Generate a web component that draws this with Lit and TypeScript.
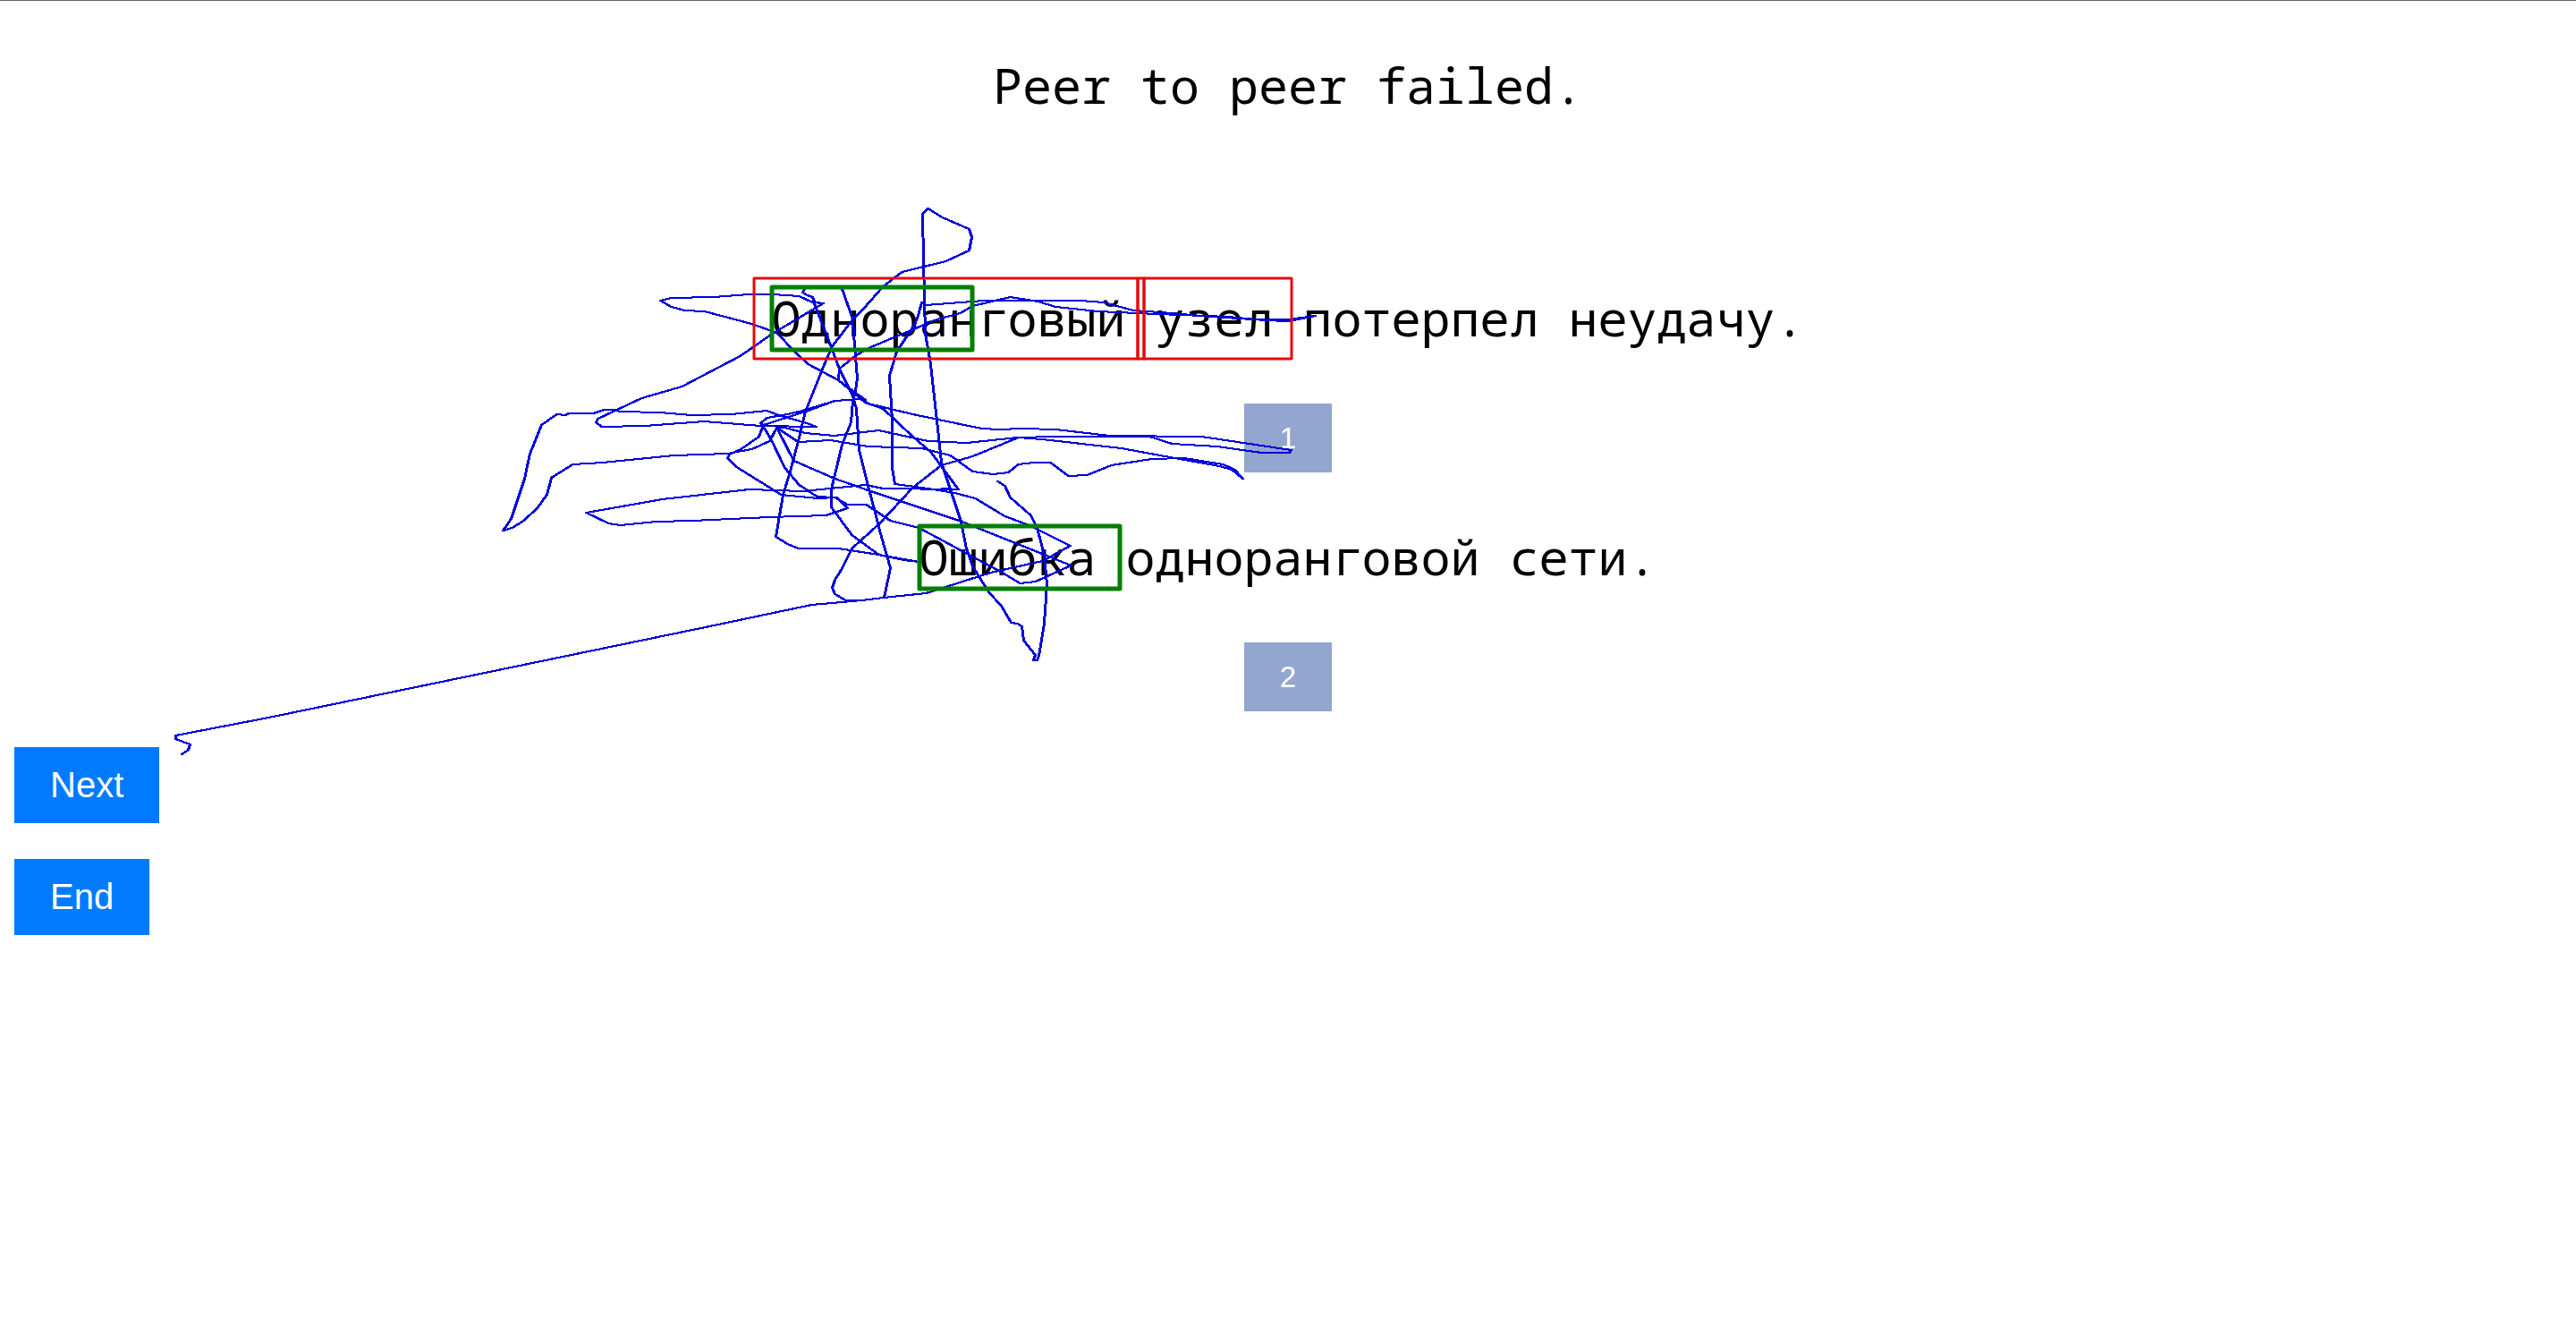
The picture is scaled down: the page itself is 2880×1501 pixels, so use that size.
import { LitElement, html, svg, css } from "lit";
import { customElement, property } from "lit/decorators.js";

/* Pointer trail, one entry per continuous stretch. */
const TRAILS: string[] = [
  "899,323 897,327 902,330 908,332 911,342 927,383 937,410 953,443 957,457 960,503 970,543 978,573 983,593 995,635 988,668",
  "941,323 953,357 955,387 958,423 956,437 953,448 951,472 941,497 933,530 929,547 929,567 952,598 982,620 1010,626 1027,628",
  "1027,628 982,620 937,613 892,613 880,608 867,600 875,553 883,527 892,493 900,460 920,410 930,387 953,357 965,345 987,320 1008,304 1057,292 1083,280 1086,265 1083,256 1053,243 1037,233 1031,239 1032,290 1033,333 1034,373 1040,407 1047,470 1052,517 1063,550 1074,583 1080,613 1087,633 1105,662 1119,677 1130,696 1137,697 1142,700 1144,716 1157,732 1155,738 1159,738 1161,733 1167,697 1170,653 1167,620 1159,590 1152,576 1129,556 1123,543 1115,538",
  "908,332 911,338 920,339 908,338 893,331 863,329 837,329 797,332 750,333 738,336 750,343 765,347 787,348 840,362 868,372 887,392 903,407 937,425 967,450 987,457 1020,488 1040,505 1057,528 1071,547 1053,546",
  "920,339 863,373 827,398 762,432 717,445 668,468 666,472 672,477 720,476 787,471 850,476 912,477 902,473 870,464 857,459 817,463 773,464 737,461 693,460 686,458 675,458 663,462 635,462 632,464 622,463 605,475 592,507 586,535 571,580 562,593 572,590 585,582 600,568 611,553 616,534 640,519 673,517 753,509 813,507 840,502 860,493 868,478 892,494 928,492 970,499 1030,501 1062,509 1087,527 1110,530 1127,528 1138,519 1155,517 1174,517 1194,532 1215,531 1242,520 1287,513 1323,512 1367,519 1380,525 1389,535 1377,525 1363,521 1313,512 1253,501 1200,495 1165,491 1138,489 1087,510 1052,520 1020,545 983,585 952,613 940,637 933,648 930,657 933,664 945,671 963,671",
  "963,671 987,668 1035,663 1060,655 1107,640 1165,627 1196,610 1150,587 1123,577 1090,557 1067,551 1037,546 1000,541 997,523 997,470 994,420 1002,393 1022,363 1026,353 1030,338 1035,341 1100,336 1207,336 1233,338 1267,347 1310,350 1353,354 1400,357 1440,357 1470,353 1440,359 1413,358 1373,354 1293,351 1227,348 1180,343 1160,337 1129,332 1087,342 1073,350 1047,357 973,388 957,397 938,412 937,425 967,447",
  "937,425 960,443 970,451 1020,463 1097,479 1117,480 1142,479 1180,480 1240,487 1343,488 1443,503 1441,506 1410,506 1360,499 1310,496 1285,488 1180,488 1137,489 1080,495 1037,493 982,481 932,487 900,484 877,478 868,478 887,515 933,535 970,548 1075,583 1197,632 1157,650 1140,652 1120,640 1027,590 995,582 968,564 947,564 933,556 913,555 893,542 877,523 862,492 855,480 850,473 857,467 880,463 897,459 933,448 960,446",
  "935,556 947,568 923,576 860,578 773,582 733,583 693,587 680,585 655,573 740,558 837,547 897,549 967,542 987,546 1071,547",
  "960,446 933,448 903,459 853,475 848,488 828,502 815,508 813,512 823,522 873,553 914,557 935,556",
  "963,671 907,676 793,700 300,802 196,822 196,826 212,832 210,838 203,843",
];

interface Box {
  x: number;
  y: number;
  w: number;
  h: number;
  kind: "hit" | "focus";
}

const BOXES: Box[] = [
  { x: 843, y: 311, w: 429, h: 90, kind: "hit" },
  { x: 1272, y: 311, w: 7, h: 90, kind: "hit" },
  { x: 1279, y: 311, w: 165, h: 90, kind: "hit" },
  { x: 863, y: 321, w: 224, h: 70, kind: "focus" },
  { x: 1028, y: 588, w: 224, h: 70, kind: "focus" },
];

@customElement("gaze-overlay")
export class GazeOverlay extends LitElement {
  static styles = css`
    :host {
      position: absolute;
      inset: 0;
      pointer-events: none;
      overflow: hidden;
    }
    .canvas {
      display: block;
      width: 100%;
      height: 100%;
      fill: none;
      stroke-linejoin: round;
    }
    .trail {
      stroke: #0000dc;
      stroke-width: 2;
      stroke-linecap: round;
      shape-rendering: crispEdges;
    }
    .hit {
      stroke: #e60a0a;
      stroke-width: 3;
    }
    .focus {
      stroke: #008000;
      stroke-width: 5;
    }
  `;

  render() {
    const trail = TRAILS.map(
      (points) => svg`<polyline class="trail" points=${points}></polyline>`
    );
    return html`<svg class="canvas" aria-hidden="true">
      <g id="trail">${trail}</g>
      <use href="#trail" x="1"></use>
      ${BOXES.map(
        (b) => svg`<rect class=${b.kind} x=${b.x} y=${b.y} width=${b.w} height=${b.h}></rect>`
      )}
    </svg>`;
  }
}

@customElement("translation-option")
export class TranslationOption extends LitElement {
  @property() text = "";
  @property({ type: Number }) number = 0;

  static styles = css`
    :host {
      display: flex;
      flex-direction: column;
      align-items: center;
      gap: 59px;
    }
    .text {
      margin: 0;
    }
    .pick {
      border: 0;
      padding: 20px 40px;
      background: #93a6cf;
      color: #fff;
      font: 33px/37px "Liberation Sans", Arial, sans-serif;
    }
  `;

  render() {
    return html`<p class="text">${this.text}</p>
      <button class="pick" type="button">${this.number}</button>`;
  }
}

@customElement("app-root")
export class AppRoot extends LitElement {
  static styles = css`
    :host {
      display: block;
      position: relative;
      box-sizing: border-box;
      min-height: 100vh;
      box-shadow: inset 0 1px #666;
      background: #fff;
      color: #000;
    }
    .page {
      padding: 57px 16px;
      font: 55px/75px "Noto Sans Mono", "Noto Mono", "Droid Sans Mono", "DejaVu Sans Mono", monospace;
    }
    .source {
      margin: 0;
      font: inherit;
      text-align: center;
    }
    .options {
      display: flex;
      flex-direction: column;
      gap: 56px;
      margin: 185px 0 40px;
    }
    .actions {
      display: flex;
      flex-direction: column;
      align-items: flex-start;
      gap: 40px;
    }
    .action {
      border: 0;
      padding: 20px 40px;
      background: #007bff;
      color: #fff;
      font: 40px/45px "Liberation Sans", Arial, sans-serif;
    }
  `;

  private options = ["Одноранговый узел потерпел неудачу.", "Ошибка одноранговой сети."];

  render() {
    return html`
      <main class="page">
        <h1 class="source">Peer to peer failed.</h1>
        <div class="options">
          ${this.options.map(
            (text, i) =>
              html`<translation-option .text=${text} .number=${i + 1}></translation-option>`
          )}
        </div>
        <div class="actions">
          <button class="action" type="button">Next</button>
          <button class="action" type="button">End</button>
        </div>
      </main>
      <gaze-overlay></gaze-overlay>
    `;
  }
}
